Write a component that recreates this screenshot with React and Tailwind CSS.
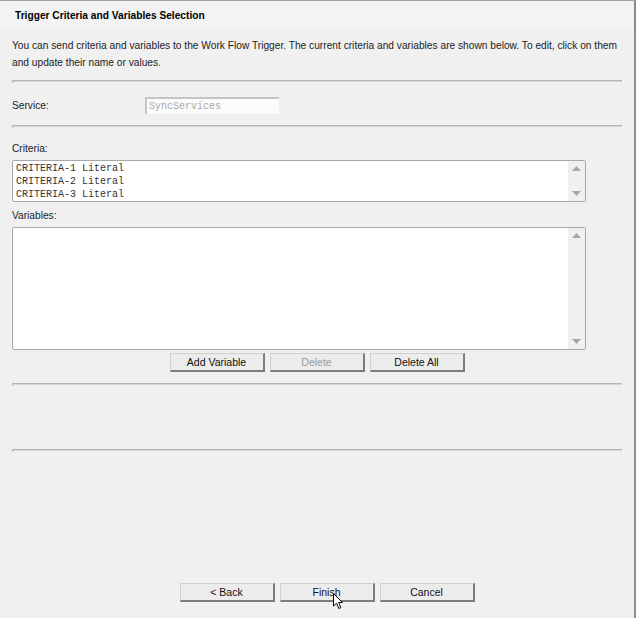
import React from 'react';

const sans = { fontFamily: '"Liberation Sans", Arial, sans-serif' };

// etched separator line with the little tick on the left
const Separator = ({ className = '' }) => (
  <div className={`mx-[12px] h-[3px] border-t border-l border-[#b4b4b4] shadow-[inset_0_1px_0_#d6d6d6] ${className}`} />
);

const Arrow = ({ up }) => (
  <svg width="9" height="5" viewBox="0 0 9 5">
    {up ? <polygon points="0,5 9,5 4.5,0" fill="#a6a6a6" /> : <polygon points="0,0 9,0 4.5,5" fill="#a6a6a6" />}
  </svg>
);

const ListBox = ({ height, lines = [] }) => (
  <div className={`mx-[12px] w-[574px] flex border border-[#a8a8a8] rounded-[2px] bg-white ${height}`}>
    <div className="flex-1 pl-[3px] pt-[1px] font-['Liberation_Mono',monospace] text-[10px] leading-[13px] text-[#333]">
      {lines.map((l) => (
        <div key={l} className="whitespace-pre">{l}</div>
      ))}
    </div>
    <div className="w-[17px] bg-[#f0f0f0] flex flex-col items-center justify-between py-[5px]">
      <Arrow up />
      <Arrow />
    </div>
  </div>
);

const Btn = ({ children, disabled, cursor }) => (
  <button
    className={`relative h-[19px] w-[95px] bg-[#ececec] border-t border-l border-t-[#cfcfcf] border-l-[#cfcfcf] border-r-2 border-b-2 border-r-[#7d7d7d] border-b-[#7d7d7d] text-[10.5px] leading-none ${disabled ? 'text-[#9a9a9a]' : 'text-[#111]'}`}
  >
    {children}
    {cursor && (
      <svg className="absolute left-[52px] top-[9px]" width="11" height="17" viewBox="0 0 11 17">
        <path d="M0.5 0.5 L0.5 13 L3.5 10.2 L5.8 15.5 L7.8 14.6 L5.6 9.5 L9.6 9.5 Z" fill="#fff" stroke="#000" strokeWidth="1" />
      </svg>
    )}
  </button>
);

export default function App() {
  return (
    <div style={sans} className="w-[636px] h-[618px] bg-[#f0f0f0] border-t border-t-[#a0a0a0] border-r-2 border-r-[#8c8c8c] text-[10.2px] text-[#1c1c1c] flex flex-col">
      {/* header */}
      <div className="h-[29px] bg-[#f3f3f3] flex items-center pl-[15px] font-bold text-black">
        Trigger Criteria and Variables Selection
      </div>

      <p className="mt-[7px] pl-[12px] leading-[17px] whitespace-nowrap">
        You can send criteria and variables to the Work Flow Trigger. The current criteria and variables are shown below. To edit, click on them
        <br />
        and update their name or values.
      </p>

      <Separator className="mt-[9px]" />

      {/* service row */}
      <div className="mt-[14px] h-[17px] flex items-center pl-[12px]">
        <span className="w-[133px]">Service:</span>
        <div className="w-[134px] h-[17px] bg-[#fbfbfb] border-t-2 border-l-2 border-t-[#c4c4c4] border-l-[#c4c4c4] flex items-center pl-[2px] font-['Liberation_Mono',monospace] text-[10px] text-[#a8a8a8]">
          SyncServices
        </div>
      </div>

      <Separator className="mt-[11px]" />

      <div className="mt-[14px] pl-[12px] leading-[14px]">Criteria:</div>
      <div className="mt-[4px]">
        <ListBox height="h-[42px]" lines={['CRITERIA-1 Literal', 'CRITERIA-2 Literal', 'CRITERIA-3 Literal']} />
      </div>

      <div className="mt-[7px] pl-[12px] leading-[14px]">Variables:</div>
      <div className="mt-[4px]">
        <ListBox height="h-[123px]" />
      </div>

      <div className="mt-[3px] flex justify-center gap-[5px]">
        <Btn>Add Variable</Btn>
        <Btn disabled>Delete</Btn>
        <Btn>Delete All</Btn>
      </div>

      <Separator className="mt-[11px]" />
      <Separator className="mt-[63px]" />

      <div className="mt-[131px] flex justify-center gap-[5px] pl-[20px]">
        <Btn>&lt; Back</Btn>
        <Btn cursor>Finish</Btn>
        <Btn>Cancel</Btn>
      </div>
    </div>
  );
}
